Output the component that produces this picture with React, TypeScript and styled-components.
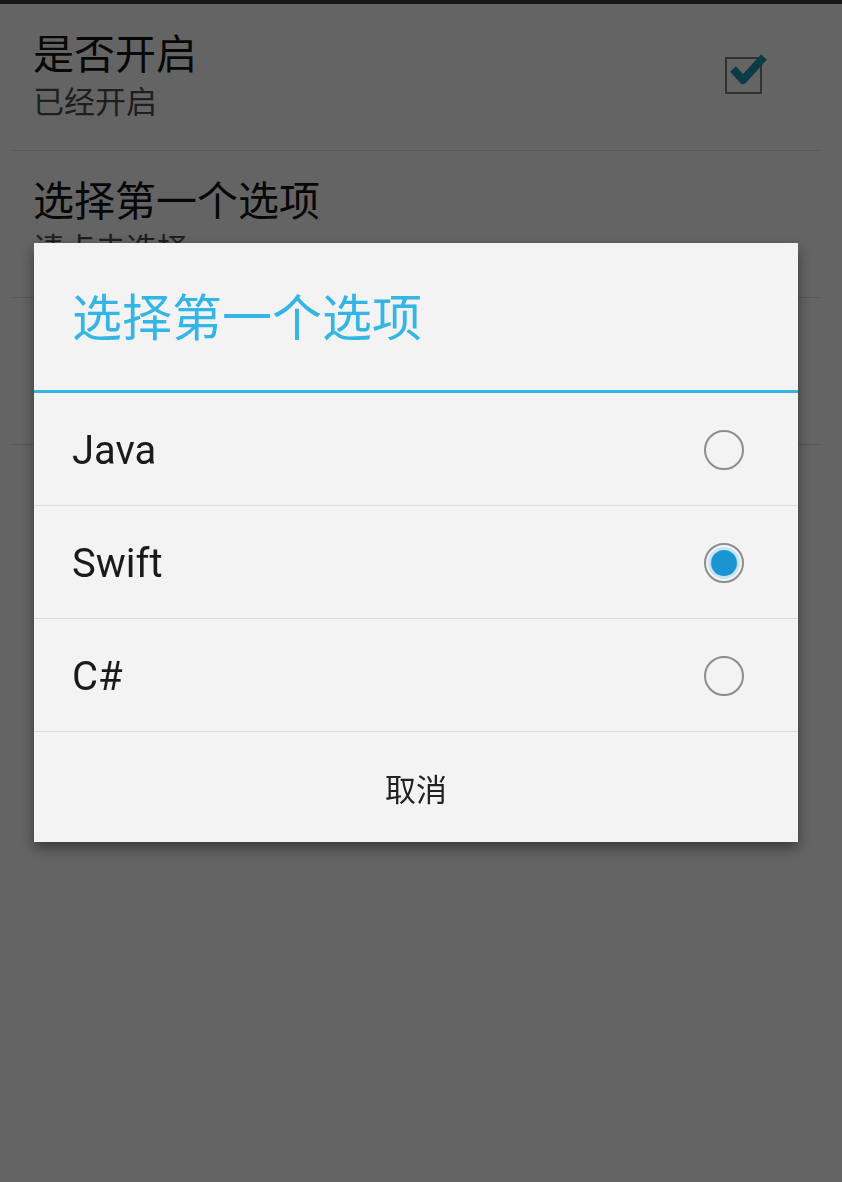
import styled, { createGlobalStyle } from 'styled-components';

const GlobalStyle = createGlobalStyle`
  html, body {
    margin: 0;
    padding: 0;
    background: #f3f3f3;
    font-family: Roboto, "Noto Sans CJK SC", sans-serif;
  }
`;

const Page = styled.div`
  width: 842px;
  height: 1182px;
  background: #f3f3f3;
  overflow: hidden;
`;

const TopEdge = styled.div`
  height: 4px;
  background: #3a3a3a;
`;

const PrefList = styled.ul`
  list-style: none;
  margin: 0;
  padding: 0;
`;

const PrefRow = styled.li`
  display: flex;
  align-items: center;
  height: 146px;
  padding-left: 33px;
  padding-right: 80px;
  position: relative;

  &::after {
    content: '';
    position: absolute;
    left: 12px;
    right: 22px;
    bottom: -1px;
    height: 1px;
    background: #d6d6d6;
  }

  & + & {
    margin-top: 1px;
  }
`;

const PrefText = styled.div`
  flex: 1;
  display: flex;
  flex-direction: column;
  gap: 4px;
`;

const PrefTitle = styled.div`
  font-size: 41px;
  line-height: 48px;
  color: #111;
`;

const PrefSummary = styled.div`
  font-size: 31px;
  line-height: 40px;
  color: #4a4a4a;
`;

const CheckWrap = styled.div`
  width: 37px;
  height: 37px;
  position: relative;
  margin-bottom: 4px;
`;

const CheckBox = styled.div`
  width: 33px;
  height: 33px;
  border: 2px solid #777;
`;

const CheckMark = styled.svg`
  position: absolute;
  left: 4px;
  top: -8px;
`;

const Overlay = styled.div`
  position: fixed;
  inset: 0;
  background: rgba(0, 0, 0, 0.59);
  display: flex;
  align-items: flex-start;
  padding: 243px 0 0 34px;
`;

const Dialog = styled.div`
  width: 764px;
  background: #f3f3f3;
  box-shadow: 0 6px 14px rgba(0, 0, 0, 0.45);
  display: flex;
  flex-direction: column;
`;

const DialogTitle = styled.div`
  height: 150px;
  display: flex;
  align-items: center;
  padding: 0 0 5px 38px;
  box-sizing: border-box;
  font-size: 50px;
  color: #33b5e5;
  border-bottom: 3px solid #33b5e5;
`;

const Option = styled.div`
  height: 113px;
  display: flex;
  align-items: center;
  justify-content: space-between;
  padding: 2px 54px 0 38px;
  box-sizing: border-box;
  font-size: 40px;
  color: #1a1a1a;
  border-bottom: 1px solid #dcdcdc;
`;

const Radio = styled.span<{ $checked?: boolean }>`
  width: 36px;
  height: 36px;
  border-radius: 50%;
  border: 2px solid #8d8d8d;
  display: flex;
  align-items: center;
  justify-content: center;

  &::after {
    content: '';
    display: ${(p) => (p.$checked ? 'block' : 'none')};
    width: 26px;
    height: 26px;
    border-radius: 50%;
    background: #1b95d2;
    box-shadow: 0 0 0 3px #c6e5f4;
  }
`;

const CancelButton = styled.div`
  height: 110px;
  display: flex;
  align-items: center;
  justify-content: center;
  font-size: 31px;
  color: #222;
`;

const options = [
  { id: 'java', label: 'Java', checked: false },
  { id: 'swift', label: 'Swift', checked: true },
  { id: 'csharp', label: 'C#', checked: false },
];

export default function App() {
  return (
    <Page>
      <GlobalStyle />
      <TopEdge />
      <PrefList>
        <PrefRow>
          <PrefText>
            <PrefTitle>是否开启</PrefTitle>
            <PrefSummary>已经开启</PrefSummary>
          </PrefText>
          <CheckWrap>
            <CheckBox />
            <CheckMark width="40" height="40" viewBox="0 0 40 40">
              <path d="M4 20 L14 31 L35 8" fill="none" stroke="#1a8fab" strokeWidth="8" strokeLinejoin="round" />
            </CheckMark>
          </CheckWrap>
        </PrefRow>
        <PrefRow>
          <PrefText>
            <PrefTitle>选择第一个选项</PrefTitle>
            <PrefSummary>请点击选择</PrefSummary>
          </PrefText>
        </PrefRow>
        <PrefRow />
      </PrefList>
      <Overlay>
        <Dialog>
          <DialogTitle>选择第一个选项</DialogTitle>
          {options.map((o) => (
            <Option key={o.id}>
              <span>{o.label}</span>
              <Radio $checked={o.checked} />
            </Option>
          ))}
          <CancelButton>取消</CancelButton>
        </Dialog>
      </Overlay>
    </Page>
  );
}
